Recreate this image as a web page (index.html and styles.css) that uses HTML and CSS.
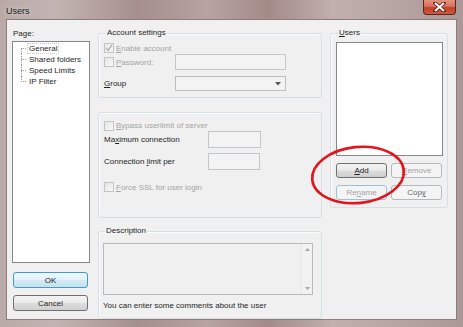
FILE: index.html
```html
<!DOCTYPE html>
<html>
<head>
    <title>Users</title>
    <link rel="stylesheet" href="styles.css">
</head>
<body>
    <div class="window">
        <div class="titlebar">
            <span class="title">Users</span>
            <span class="close">
                <svg width="13" height="10" viewBox="0 0 13 10">
                    <path d="M2 1 L11 9 M11 1 L2 9" stroke="#4a1a12" stroke-width="3.4" stroke-linecap="round"/>
                    <path d="M2 1 L11 9 M11 1 L2 9" stroke="#fff" stroke-width="2"/>
                </svg>
            </span>
        </div>

        <div class="client">
            <div class="side">
                <div class="label">Page:</div>
                <ul class="tree">
                    <li class="sel"><span>General</span></li>
                    <li><span>Shared folders</span></li>
                    <li><span>Speed Limits</span></li>
                    <li><span>IP Filter</span></li>
                </ul>
                <button class="btn default">OK</button>
                <button class="btn cancel">Cancel</button>
            </div>

            <div class="main">
                <fieldset class="group account">
                    <legend>Account settings</legend>
                    <div class="check off row-enable">
                        <span class="cb">
                            <svg width="8" height="8" viewBox="0 0 8 8"><path d="M1 4 L3 6.5 L7 0.8" fill="none" stroke="#a8a8a8" stroke-width="1.2"/></svg>
                        </span>
                        <span><u>E</u>nable account</span>
                    </div>
                    <div class="row row-pass">
                        <div class="check off col-a"><span class="cb"></span><span><u>P</u>assword:</span></div>
                        <span class="field wide"></span>
                    </div>
                    <div class="row row-group">
                        <span class="col-a lbl"><u>G</u>roup</span>
                        <span class="field wide select">
                            <svg width="6" height="4" viewBox="0 0 6 4"><path d="M0 0 L6 0 L3 3.5 Z" fill="#555"/></svg>
                        </span>
                    </div>
                </fieldset>

                <fieldset class="group limits">
                    <div class="check off row-bypass"><span class="cb"></span><span><u>B</u>ypass userlimit of server</span></div>
                    <div class="row row-max">
                        <span class="col-b lbl">Ma<u>x</u>imum connection</span>
                        <span class="field num"></span>
                    </div>
                    <div class="row row-limit">
                        <span class="col-b lbl">Connection <u>l</u>imit per</span>
                        <span class="field num short"></span>
                    </div>
                    <div class="check off row-ssl"><span class="cb"></span><span><u>F</u>orce SSL for user login</span></div>
                </fieldset>

                <fieldset class="group desc">
                    <legend>Description</legend>
                    <div class="memo">
                        <div class="memo-text"></div>
                        <div class="scroll">
                            <svg width="5" height="3" viewBox="0 0 5 3"><path d="M0 3 L5 3 L2.5 0 Z" fill="#a6a6a6"/></svg>
                            <svg width="5" height="3" viewBox="0 0 5 3"><path d="M0 0 L5 0 L2.5 3 Z" fill="#a6a6a6"/></svg>
                        </div>
                    </div>
                    <div class="hint">You can enter some comments about the user</div>
                </fieldset>
            </div>

            <div class="side-right">
                <fieldset class="group users">
                    <legend><u>U</u>sers</legend>
                    <div class="userlist"></div>
                    <div class="btn-row">
                        <button class="btn small"><u>A</u>dd</button>
                        <button class="btn small disabled"><u>R</u>emove</button>
                    </div>
                    <div class="btn-row">
                        <button class="btn small disabled focus">Re<u>n</u>ame</button>
                        <button class="btn small disabled dark">Cop<u>y</u></button>
                    </div>
                </fieldset>
            </div>
        </div>

        <svg class="mark" width="104" height="66" viewBox="0 0 104 66">
            <ellipse cx="52" cy="33" rx="46" ry="28" transform="rotate(-6 52 33)" fill="none" stroke="#e3141c" stroke-width="2.6"/>
        </svg>
    </div>
</body>
</html>
```

FILE: styles.css
```css
body { margin: 0; font-family: "Liberation Sans", Arial, sans-serif; font-size: 8px; color: #1e1e1e; }
u { text-decoration: underline; }

.window { position: relative; width: 463px; height: 327px; box-sizing: border-box; padding: 0 6px 7px; display: flex; flex-direction: column;
    background: linear-gradient(90deg, #b9aaa8 0%, #c2b4b2 12%, #a68f8c 30%, #b7a3a0 45%, #a38b88 58%, #c1b0ae 72%, #b4a3a1 88%, #a99896 100%); }

.titlebar { height: 21px; display: flex; justify-content: space-between; align-items: flex-start; }
.title { font-size: 9px; line-height: 10px; margin-top: 6px; color: #1b1b1b; text-shadow: 0 0 5px rgba(255,255,255,0.7); }
.close { width: 33px; height: 15px; margin-right: 1px; box-sizing: border-box; display: flex; align-items: center; justify-content: center;
    border: 1px solid #5e241b; border-top: none; border-radius: 0 0 4px 4px;
    background: linear-gradient(#e39482 0%, #d8705a 45%, #c3402a 55%, #cf5a3f 100%); }

.client { flex: 1; display: flex; align-items: flex-start; background: #f0f0f0; border: 1px solid #8d7d7a; padding: 8px 0 0 5px; }

/* left: page tree */
.side { width: 78px; }
.label { height: 12px; line-height: 12px; padding-left: 1px; }
.tree { list-style: none; margin: 1px 0 0; padding: 1px 0 0; height: 222px; box-sizing: border-box; background: #fff; border: 1px solid #828790; }
.tree li { position: relative; height: 11px; line-height: 11px; padding-left: 14px; white-space: nowrap; }
.tree li::before { content: ""; position: absolute; left: 8px; top: 5px; width: 5px; border-top: 1px dotted #9a9a9a; }
.tree li::after { content: ""; position: absolute; left: 8px; top: 0; bottom: 0; border-left: 1px dotted #9a9a9a; }
.tree li:first-child::after { top: 5px; }
.tree li:last-child::after { bottom: 5px; }
.tree li span { padding: 0 1px; border: 1px solid transparent; }
.tree li.sel span { border: 1px dotted #c9c9c9; }

.btn { display: flex; align-items: center; justify-content: center; box-sizing: border-box; padding: 0; font: inherit; color: #1e1e1e;
    border: 1px solid #707070; border-radius: 3px; background: linear-gradient(#f3f3f3 0%, #ebebeb 48%, #dddddd 52%, #cfcfcf 100%); }
.side .btn { width: 75px; height: 16px; margin-left: 1px; }
.btn.default { margin-top: 9px; border-color: #3c9ec8; background: linear-gradient(#eef7fc 0%, #e3f1f9 48%, #d4e9f5 52%, #c6e1f0 100%); }
.btn.cancel { margin-top: 7px; }

/* middle column */
.main { width: 224px; margin-left: 8px; }
.group { margin: 0; padding: 0; min-width: 0; border: 1px solid #d5dfe5; border-radius: 3px; box-shadow: inset 1px 1px 0 #fbfbfb; }
.group legend { margin-left: 2px; padding: 0 1px; line-height: 10px; height: 10px; }

.row { display: flex; align-items: center; }
.check { display: flex; align-items: center; gap: 2px; }
.check.off { color: #a3a3a3; }
.cb { width: 10px; height: 10px; box-sizing: border-box; border: 1px solid #c4c4c4; background: linear-gradient(135deg, #e6e6e6, #f8f8f8);
    display: flex; align-items: center; justify-content: center; }
.field { display: flex; align-items: center; justify-content: flex-end; box-sizing: border-box; border: 1px solid #c3c7cb; background: #f3f3f3; }

.account { height: 68px; padding: 0 0 0 5px; }
.row-enable { height: 12px; margin-top: 4px; }
.row-pass { height: 16px; }
.row-group { height: 15px; margin-top: 6px; }
.col-a { width: 71px; }
.wide { width: 111px; height: 100%; }
.select { padding-right: 4px; border-color: #bdbdbd; }
.lbl { line-height: 12px; }

.limits { height: 97px; margin-top: 14px; padding: 7px 0 0 5px; }
.row-bypass { height: 11px; }
.row-max { height: 17px; }
.row-limit { height: 17px; margin-top: 5px; }
.row-ssl { height: 12px; margin-top: 11px; }
.col-b { width: 104px; }
.num { width: 53px; height: 100%; }
.num.short { width: 52px; }

.desc { height: 91px; margin-top: 8px; padding: 0 0 0 4px; }
.memo { display: flex; width: 210px; height: 52px; margin-top: 7px; box-sizing: border-box; border: 1px solid #b7b9bd; background: #f0f0f0; }
.memo-text { flex: 1; }
.scroll { width: 11px; display: flex; flex-direction: column; justify-content: space-between; align-items: center; padding: 4px 0; box-sizing: border-box;
    border-left: 1px solid #e6e6e6; background: #f2f2f2; }
.hint { line-height: 12px; margin-top: 5px; }

/* right column */
.side-right { width: 118px; margin-left: 8px; }
.users { height: 178px; padding: 0 0 0 5px; }
.userlist { width: 107px; height: 114px; margin-top: 4px; box-sizing: border-box; border: 1px solid #828790; background: #fff; }
.btn-row { display: flex; gap: 4px; margin-top: 7px; }
.btn.small { width: 51px; height: 15px; }
.btn.disabled { color: #a3a3a3; border-color: #b5b9bc; background: #f4f4f4; }
.btn.disabled.focus { border-color: #9dc0da; }
.btn.disabled.dark { color: #6b6b6b; }

.mark { position: absolute; left: 306px; top: 142px; }
```
